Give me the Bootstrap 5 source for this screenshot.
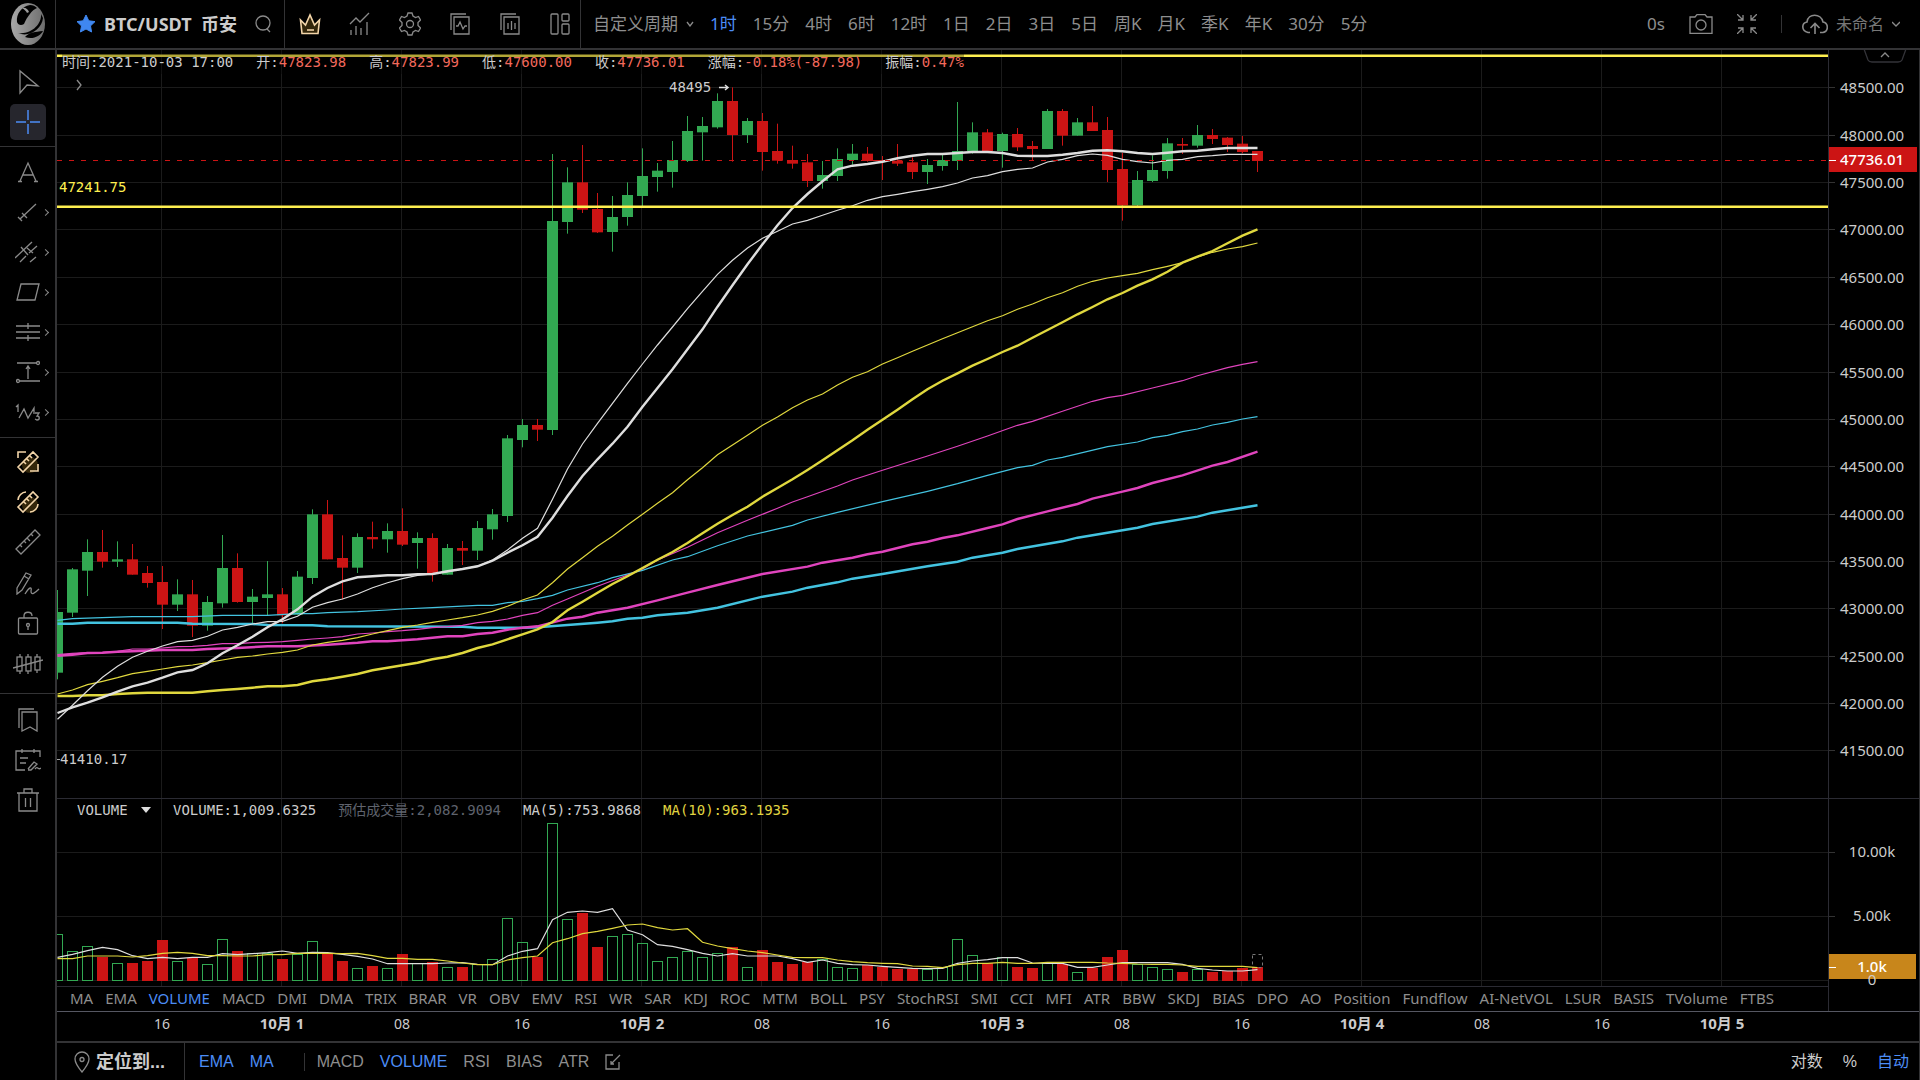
<!DOCTYPE html>
<html lang="zh-CN">
<head>
<meta charset="utf-8">
<meta name="viewport" content="width=device-width, initial-scale=1">
<title>BTC/USDT 币安</title>
<link rel="stylesheet" href="https://cdn.jsdelivr.net/npm/bootstrap@5.3.0/dist/css/bootstrap.min.css">
<style>
:root{--edge:#333335;--dim:#8e8e8e;--blue:#4c8df6;--axis:#2b2b33}
body{background:#000;color:var(--dim);font-family:"Noto Sans","Noto Sans CJK SC",sans-serif;font-size:17px;line-height:24px;overflow:hidden}
button,select{background:none;border:0;padding:0;color:inherit;font:inherit;white-space:nowrap}
button svg,.plain-ico svg{display:block}
svg.ico{fill:none;stroke:#8a8a8a;stroke-width:1.3}
.on{color:var(--blue)}
.topbar{height:50px;border-bottom:2px solid var(--edge)}
.logo-cell{width:56px;border-right:1px solid var(--edge)}
.pair-cell{width:229px;border-right:1px solid var(--edge);padding-left:20px}
.pair-name{font-size:18px;font-weight:700;color:#ccc;margin-right:18px}
.tools-cell{width:296px;border-right:1px solid var(--edge)}
.tools-cell button{width:50px;height:48px;display:flex;flex-shrink:0;align-items:center;justify-content:center}
.period-nav{gap:16px;padding-left:12px}
.account{padding-right:20px}
.account .bar{margin:0 20px 0 24px}
.cloud-name{font-size:16px;color:#777}
.toolbar-left{width:57px;border-right:2px solid var(--edge)}
.tool-set{border-bottom:1px solid var(--edge)}
.tool-set button{position:relative;display:flex;width:100%;height:40px;align-items:center;justify-content:center}
.tool-set:nth-child(1){padding:12px 0 4px}
.tool-set:nth-child(2){padding:5px 0 5px}
.tool-set:nth-child(3){padding:4px 0 11px}
.tool-set:nth-child(4){padding:6px 0;border:0}
.tool-set .picked svg{background:#26262d;border-radius:5px}
.has-sub::after{content:"";position:absolute;right:7px;top:18px;width:5px;height:5px;border:solid #888;border-width:1px 1px 0 0;transform:rotate(45deg)}
.work{border-right:1px solid var(--edge)}
.axis-col{width:91px;border-left:1px solid var(--axis)}
.plot{min-height:0}
.plot svg.fill,.axis-col svg.fill{position:absolute;inset:0;width:100%;height:100%}
.mono{font:14px/22px "DejaVu Sans Mono","Noto Sans CJK SC",monospace;color:#ccc}
.quote-strip{position:absolute;left:5px;top:0;height:24px;gap:23px;background:rgba(0,0,0,.3);white-space:nowrap}
.quote-strip b{font-weight:400;color:#f2695c}
.fold{position:absolute;left:13px;top:28px}
.vol-strip{position:absolute;left:20px;top:749px;gap:22px;white-space:nowrap}
.vol-strip select{appearance:none;width:56px}
.estimate{color:#5f636d}
.ma-slow{color:#e0d440}
.ind-row{height:25px;border-top:1px solid var(--axis);padding:0 0 3px 13px;gap:12px;font-size:15px;line-height:20px;overflow:hidden}
.time-row{height:32px;border-top:1px solid #555762;border-bottom:2px solid var(--edge)}
.foot{height:37px;font:16px/24px "Liberation Sans","Noto Sans CJK SC",sans-serif;color:var(--dim)}
.locate{width:128px;border-right:1px solid var(--edge);padding-left:17px;gap:6px;color:#ccc;font-size:18px;font-weight:700}
.picks{padding-left:14px;gap:16px}
.picks .bar{margin:0 -4px 0 14px}
.scale-mode{padding-right:10px;color:#ccc}
.bar{width:1px;height:18px;background:var(--edge)}
svg text{font-family:"Noto Sans","Noto Sans CJK SC",sans-serif;fill:#ccc}
svg .lbl{font-size:15px}
svg .hour{font-size:14px}
svg .day{font-size:15px;font-weight:700}
svg text.code{font:14px "DejaVu Sans Mono",monospace}
svg text.hot{fill:#fff;font-weight:500}
.fold-tab{position:absolute;right:11px;top:-2px}
</style>
<script src="https://cdn.jsdelivr.net/npm/bootstrap@5.3.0/dist/js/bootstrap.bundle.min.js"></script>
</head>
<body>
<div class="d-flex flex-column vh-100">
<header class="topbar d-flex align-items-stretch flex-shrink-0">
  <div class="logo-cell plain-ico d-flex align-items-center justify-content-center">
    <svg width="36" height="44" viewBox="0 0 36 44"><defs><linearGradient id="ball" x1="0" x2="1"><stop offset="0" stop-color="#a8a8a8"/><stop offset="1" stop-color="#6d6d6d"/></linearGradient></defs><ellipse cx="18" cy="22" rx="17" ry="21" fill="url(#ball)"/><path d="M7 20C6 12 12 4 20 3c3 0 5 1 7 3-5 2-10 9-13 16-3 2-6 1-7-2zM31 12c1 10-10 21-23 19 11 5 24-4 25-15zM15 35c5-5 10-5 18-6-3 5-10 9-18 6z" fill="#000"/><path d="M12 6c3-1 6 1 7 4l-2 1c-1-2-3-4-5-5z" fill="#9a9a9a"/></svg>
  </div>
  <div class="pair-cell d-flex align-items-center plain-ico">
    <svg width="20" height="20" viewBox="0 0 20 20" class="me-2"><path d="M10 1l2.8 5.8 6.2.8-4.500 4.300L15.600 18 10 15 4.400 18l1.100-6.100L1 7.600l6.200-.8z" fill="#3f87f0" stroke="#3f87f0"/></svg>
    <span class="pair-name">BTC/USDT&nbsp; 币安</span>
    <button aria-label="搜索"><svg class="ico" width="18" height="20" viewBox="0 0 18 20"><circle cx="8" cy="9" r="7"/><path d="M12 15l3 3"/></svg></button>
  </div>
  <div class="tools-cell d-flex align-items-center">
    <button aria-label="会员"><svg class="ico" width="22" height="22" viewBox="0 0 22 22"><path d="M3 20.500L1.500 7l5 5L11 2l4.500 10 5-5L19 20.500z" fill="#33260a" style="stroke:#f3d5a9;stroke-width:1.600"/><path d="M8 17h7" style="stroke:#f3d5a9;stroke-width:1.600"/></svg></button>
    <button aria-label="指标"><svg class="ico" width="22" height="24" viewBox="0 0 22 24"><path d="M1 12l6-6 4 4 9-9M2 18v5M7 14v9M12 16v7M18 10v13"/></svg></button>
    <button aria-label="设置"><svg class="ico" width="22" height="24" viewBox="0 0 22 24"><path d="M9 1h4l1 3 2.500 1.500L19.500 4.500l2 3.500-2.500 2.500v3l2.500 2.500-2 3.500-3-1L14 20l-1 3H9l-1-3-2.500-1.500-3 1-2-3.500L3 13.500v-3L.5 8l2-3.500 3 1L8 4z"/><circle cx="11" cy="12" r="3.500"/></svg></button>
    <button aria-label="线形"><svg class="ico" width="22" height="24" viewBox="0 0 22 24"><path d="M5 5h15v17H5zM2 18V2h15M7 14h2l2-4 3 7 2-3h2"/></svg></button>
    <button aria-label="复盘"><svg class="ico" width="22" height="24" viewBox="0 0 22 24"><path d="M5 5h15v17H5zM2 18V2h15M9 11v6M12.500 9v9M16 11v6"/></svg></button>
    <button aria-label="布局"><svg class="ico" width="22" height="24" viewBox="0 0 22 24"><rect x="2" y="2" width="7" height="20" rx="1"/><rect x="13" y="2" width="7" height="7" rx="1"/><rect x="13" y="12" width="7" height="10" rx="1"/></svg></button>
  </div>
  <nav class="period-nav d-flex align-items-center">
    <button class="d-flex align-items-center gap-1">自定义周期<svg class="ico mx-1 me-0" width="8" height="6" viewBox="0 0 8 6"><path d="M1 1l3 4 3-4"/></svg></button>
    <button class="on">1时</button><button>15分</button><button>4时</button><button>6时</button><button>12时</button><button>1日</button><button>2日</button><button>3日</button><button>5日</button><button>周K</button><button>月K</button><button>季K</button><button>年K</button><button>30分</button><button>5分</button>
  </nav>
  <div class="account ms-auto d-flex align-items-center">
    <span class="me-4">0s</span>
    <button class="me-4" aria-label="截图"><svg class="ico" width="24" height="20" viewBox="0 0 24 20"><path d="M1 3h5l2-2.400h8L18 3h5v16.400H1z"/><circle cx="12" cy="11" r="5"/></svg></button>
    <button aria-label="退出全屏"><svg class="ico" width="20" height="20" viewBox="0 0 20 20"><path d="M0 0l6 6M1 6h5V1M20 0l-6 6M19 6h-5V1M0 20l6-6M1 14h5v5M20 20l-6-6M19 14h-5v5"/></svg></button>
    <span class="bar"></span>
    <button class="d-flex align-items-center cloud-name"><svg class="ico me-2" width="26" height="20" viewBox="0 0 26 20"><path d="M8 18.500H6C-1 17-.5 9 5 8 6-1 19-1 21 8c5.500 1 6 9 0 10.500h-3M13 20V10M8.500 14L13 9.500l4.500 4.500" style="stroke-width:1.600"/></svg>未命名<svg class="ico ms-2" width="8" height="6" viewBox="0 0 8 6"><path d="M0 1l4 4 4-4"/></svg></button>
  </div>
</header>

<div class="d-flex flex-fill plot">
<aside class="toolbar-left flex-shrink-0">
  <div class="tool-set">
    <button aria-label="光标"><svg class="ico" width="24" height="26" viewBox="0 0 24 26"><path d="M4 2v22l7-8 11 1z"/></svg></button>
    <button class="picked" aria-label="十字线"><svg class="ico" width="36" height="36" viewBox="0 0 36 36"><path d="M18 6v10M18 20v10M6 18h10M20 18h10" style="stroke:#4c8df6;stroke-width:1.500"/></svg></button>
  </div>
  <div class="tool-set">
    <button aria-label="文字"><svg class="ico" width="24" height="24" viewBox="0 0 24 24"><path d="M4 21L12 3l8 18M7 15h10M2 21.500h4M18 21.500h4"/></svg></button>
    <button class="has-sub" aria-label="线段"><svg class="ico" width="24" height="24" viewBox="0 0 24 24"><path d="M4 19L20 4M2 17l4 4M6 13l5 5"/></svg></button>
    <button class="has-sub" aria-label="平行线"><svg class="ico" width="26" height="24" viewBox="0 0 26 24"><path d="M0 18L17 2M5 22l6-6M14 13l8-7M15 22l6-5M6 7l7 8M12 8l6 5"/></svg></button>
    <button class="has-sub" aria-label="图形"><svg class="ico" width="24" height="24" viewBox="0 0 24 24"><path d="M5 4h18l-4 16H1z"/></svg></button>
    <button class="has-sub" aria-label="水平线"><svg class="ico" width="24" height="24" viewBox="0 0 24 24"><path d="M0 6h24M0 12h24M0 18h24M12 3v6M12 15v6"/></svg></button>
    <button class="has-sub" aria-label="测量"><svg class="ico" width="24" height="24" viewBox="0 0 24 24"><path d="M1 3h20M3 21h21M12 19V7M10 9l2-3 2 3"/><circle cx="22" cy="3" r="1.500"/><circle cx="2" cy="21" r="1.500"/></svg></button>
    <button class="has-sub" aria-label="波浪"><svg class="ico" width="26" height="24" viewBox="0 0 26 24"><path d="M1 7l2-2v7M4 18l5-9 4 9 6-10 0 6M20 13h4l-2 3c3 0 3 4 0 4l-2-1"/></svg></button>
  </div>
  <div class="tool-set">
    <button aria-label="标尺一"><svg class="ico" width="24" height="24" viewBox="0 0 24 24"><circle cx="14" cy="15" r="8" fill="#33260a" style="stroke:none"/><path d="M2 8V2h8M22 14v7h-8M2 17L17 2l5 5L7 22zM8 12l2 2M11 9l2 2M14 6l2 2" style="stroke:#f3d5a9;stroke-width:1.600"/></svg></button>
    <button aria-label="标尺二"><svg class="ico" width="24" height="24" viewBox="0 0 24 24"><circle cx="14" cy="15" r="8" fill="#33260a" style="stroke:none"/><path d="M2 10c0-4 4-8 8-8M22 14c0 4-4 8-8 8M2 17L17 2l5 5L7 22zM8 12l2 2M11 9l2 2M14 6l2 2" style="stroke:#f3d5a9;stroke-width:1.600"/></svg></button>
    <button aria-label="尺子"><svg class="ico" width="26" height="26" viewBox="0 0 26 26"><path d="M1 20L20 1l5 5L6 25zM5 16l2 2M9 12l2 2M12 9l3 3M16 5l2 2"/></svg></button>
    <button aria-label="画笔"><svg class="ico" width="26" height="26" viewBox="0 0 26 26"><path d="M2 19L11 4l5 2-9 15-5 4zM9 7l5 3M10 25c5-8 7-7 6-3 0 5 4 2 8-2"/></svg></button>
    <button aria-label="锁定"><svg class="ico" width="22" height="26" viewBox="0 0 22 26"><rect x="1.500" y="9" width="19" height="16" rx="1"/><path d="M7 9V7c0-5 8-5 8 0M11 17v4"/><circle cx="11" cy="16" r="1.500"/></svg></button>
    <button aria-label="蜡烛"><svg class="ico" width="30" height="26" viewBox="0 0 30 26"><path d="M0 19L30 11M7 5v3M7 22v3M15 5v3M15 22v3M24 5v3M24 21v3"/><rect x="4" y="8" width="5" height="14"/><rect x="13" y="8" width="5" height="14"/><rect x="22" y="8" width="5" height="13"/></svg></button>
  </div>
  <div class="tool-set">
    <button aria-label="书签"><svg class="ico" width="22" height="24" viewBox="0 0 22 24"><path d="M5 4h15v19l-7-4-8 4zM2 20V1h15"/></svg></button>
    <button aria-label="笔记"><svg class="ico" width="26" height="24" viewBox="0 0 26 24"><path d="M10 22H1V3h24v6M7 1v4M19 1v4M5 10h8M5 15h6M13 21l6-7 3 2-6 6h-3M20 21c3-4 3 2 6-1"/></svg></button>
    <button aria-label="删除"><svg class="ico" width="22" height="24" viewBox="0 0 22 24"><path d="M0 5h22M2 5v18h18V5M7 5V1h8v4M8.500 10v9M13.500 10v9"/></svg></button>
  </div>
</aside>

<main class="work d-flex flex-column flex-fill">
  <div class="d-flex flex-fill">
    <div class="d-flex flex-column flex-fill">
      <div class="position-relative flex-fill plot overflow-hidden">
        <svg class="fill" id="chart" role="img" aria-label="K线图"></svg>
        <div class="quote-strip mono d-flex align-items-center">
          <span>时间:2021-10-03 17:00</span><span>开:<b>47823.98</b></span><span>高:<b>47823.99</b></span><span>低:<b>47600.00</b></span><span>收:<b>47736.01</b></span><span>涨幅:<b>-0.18%(-87.98)</b></span><span>振幅:<b>0.47%</b></span>
        </div>
        <button class="fold" aria-label="展开"><svg class="ico" width="18" height="14" viewBox="0 0 18 14"><path d="M7 2l4 5-4 5"/></svg></button>
        <div class="vol-strip mono d-flex align-items-center">
          <label class="d-flex align-items-center gap-2"><select class="mono" aria-label="副图指标"><option>VOLUME</option><option>MACD</option></select><svg width="10" height="6" viewBox="0 0 10 6"><path d="M0 0h10L5 6z" fill="#ddd"/></svg></label>
          <span>VOLUME:1,009.6325</span><span class="estimate">预估成交量:2,082.9094</span><span>MA(5):753.9868</span><span class="ma-slow">MA(10):963.1935</span>
        </div>
      </div>
      <div class="ind-row d-flex align-items-center flex-shrink-0" id="indicators"></div>
    </div>
    <div class="axis-col position-relative flex-shrink-0">
      <svg class="fill" id="axis"></svg>
      <button class="fold-tab" aria-label="收起"><svg class="ico" width="46" height="16" viewBox="0 0 46 16"><path d="M2 1l4 11c1 2 2 2 4 2h26c2 0 3 0 4-2l4-11" style="stroke:#333338"/><path d="M19 9l4-4 4 4"/></svg></button>
    </div>
  </div>
  <div class="time-row flex-shrink-0"><svg id="times" class="d-block" width="100%" height="28"></svg></div>
  <footer class="foot d-flex align-items-stretch flex-shrink-0">
    <button class="locate d-flex align-items-center"><svg class="ico" width="16" height="22" viewBox="0 0 16 22"><path d="M8 21C3 15 1 11 1 8a7 7 0 0 1 14 0c0 3-2 7-7 13z"/><circle cx="8" cy="8.500" r="2"/></svg>定位到...</button>
    <div class="picks d-flex align-items-center"><button class="on">EMA</button><button class="on">MA</button><span class="bar"></span><button>MACD</button><button class="on">VOLUME</button><button>RSI</button><button>BIAS</button><button>ATR</button><button aria-label="编辑"><svg class="ico" width="16" height="16" viewBox="0 0 16 16"><path d="M8 1H1v14h13V8M6 10l9-9M6 7v3h3"/></svg></button></div>
    <div class="scale-mode ms-auto d-flex align-items-center"><button class="me-3">对数</button><button class="mx-1">%</button><button class="on ms-3">自动</button></div>
  </footer>
</main>
</div>
</div>

<script>
const names = 'MA EMA VOLUME MACD DMI DMA TRIX BRAR VR OBV EMV RSI WR SAR KDJ ROC MTM BOLL PSY StochRSI SMI CCI MFI ATR BBW SKDJ BIAS DPO AO Position Fundflow AI-NetVOL LSUR BASIS TVolume FTBS'.split(' ');
document.getElementById('indicators').innerHTML = names.map(n => `<button${n === 'VOLUME' ? ' class="on"' : ''}>${n}</button>`).join('');

const UP = '#32a852', DOWN = '#cc1414', STEP = 15, FIRST = 57.5;
const px = i => FIRST + STEP * i;
// heights are stored in thirds of a pixel, counted from the origin of their block
const y = (origin, v) => origin + v / 3;

// high, body top, body bottom, low, direction
const candles = [
 [460, '390 456 638 658 G|324 328 458 471 G|238 276 332 408 G|210 276 305 323 R|244 298 305 321 G|252 298 344 344 R|318 339 369 383 R|318 366 434 507 R|358 403 434 453 G|360 403 497 531 R|408 426 497 512 G|225 324 430 443 G|280 324 426 428 R|387 410 426 490 G|303 403 414 466 G|384 403 466 490 R|333 350 464 464 G|148 163 354 372 G|120 163 298 298 R|226 294 323 418 R|220 231 323 339 G|185 231 238 266 R|190 213 238 278 G|145 213 254 258 R|217 234 249 326 G|220 234 340 365 R|252 264 344 344 G|243 264 272 315 R|183 204 272 300 G|147 163 208 239 G'],
 [80, '1065 1075 1308 1326 G|1017 1035 1080 1102 G|1017 1035 1049 1083 R|222 423 1050 1065 G|262 307 426 461 G|195 307 389 399 R|339 387 457 459 R|348 411 456 515 G|307 345 411 437 G|205 288 348 378 G|249 272 291 335 G|183 240 276 323 G|108 153 243 246 G|111 138 157 242 G|40 63 142 146 G|22 63 165 245 R|114 123 165 189 G|99 123 216 272 R|131 213 242 251 R|197 240 251 266 R|222 247 303 321 R|243 285 303 326 G|205 237 288 303 G|192 221 240 254 G|201 221 243 245 R|228 240 243 300 R|192 242 251 258 R|232 247 276 297 R|237 255 276 312 G|225 240 258 272 G|66 213 243 270 G|127 157 213 221 G|147 157 213 213 R|158 162 213 263 G|144 162 202 213 R|183 198 207 242 R|87 93 207 207 G|87 93 167 197 R|114 127 167 167 G|78 127 153 153 R|111 150 270 306 R|218 267 376 422 R|273 300 376 380 G|226 270 303 306 G|174 190 273 296 G|174 192 197 222 R|135 165 197 203 G|147 165 177 192 R|171 173 195 216 R|168 191 216 220 R|213 213 243 276 R']
].flatMap(([o, s]) => s.split('|').map(t => { const p = t.split(' '); return [...p.slice(0, 4).map(v => y(o, +v)), p[4]]; }));

// moving averages: bar:value pairs, or bare values for consecutive bars
function parse(parts) {
  let i = -1; const pts = [];
  for (const [o, s] of parts) for (const t of s.split(' ')) {
    const [a, b] = t.split(':');
    if (b === undefined) { i++; pts.push([px(i), y(o, +a)]); } else { i = +a; pts.push([px(i), y(o, +b)]); }
  }
  return pts.map(p => p[0] + ',' + p[1].toFixed(1)).join(' ');
}
const averages = [
 ['#43c3e0', 1, [[460, '0:481 476 3:473 5:470 9:470 11:466 14:466 16:461 461 458 20:455 22:450 447 25:443 28:436 436 428 424 416'], [220, '33:1126 1110 36:1088 1073 39:1051 41:1020 1010 44:977 46:948 49:916 900 52:877 55:845 58:814 60:791 62:766 64:743 736 720 712 70:680 72:666 653 646 635 627 615 607 597 590']]],
 ['#43c3e0', 2, [[460, '0:491 491 488 8:488 491 13:492 495 17:496 499 27:500 503 31:503'], [220, '32:1222 36:1208 1204 1196 1193 1186 42:1178 44:1163 47:1130 49:1115 1103 52:1087 1076 55:1062 58:1039 60:1025 1013 63:998 987 67:964 953 70:938 72:923 912 76:890 878 79:863 856']]],
 ['#e044bd', 1, [[460, '0:584 580 578 577 574 567 567 564 560 559 556 551 551 548 547 545 541 537 534 530 522 519 515 512 508 503 500 496 488 484 477 466 458'], [220, '33:1156 1137 36:1099 38:1065 1047 1020 42:982 44:938 46:901 48:865 846 830 52:798 780 55:751 58:708 60:679 62:648 64:616 604 67:574 69:544 533 526 73:504 75:482 467 78:443 433 425']]],
 ['#e044bd', 2, [[460, '0:587 584 579 578 575 574 7:570 9:570 567 12:564 14:559 16:559 18:554 20:548 544 544 24:538 26:529 529 522 518 509 503 499'], [220, '34:1196 1190 1178 38:1163 40:1141 42:1118 44:1095 47:1062 50:1040 1028 53:1013 1003 995 57:973 965 954 946 62:924 913 897 66:874 68:852 836 71:815 804 789 75:766 77:737 726 80:695']]],
 ['#e0d83e', 1, [[460, '0:702 690 674 664 653 641 634 627 620 615 608 600 592 588 582 577 570 555 547 541 533 522 512 502 495 487 480 473 465 454 439 420 405'], [220, '33:1088 1047 1013 979 949 915 883 850 818 779 743 704 675 646 616 591 563 540 522 495 472 455 432 413 394 375 356 338 320 302 287 268 252 233 218 199 184 174 167 160 149 139 128 111 97 87 80 69']]],
 ['#e0d83e', 2, [[460, '0:708 708 706 706 702 700 698 698 698 698 694 690 687 683 679 679 675 664 658 650 642 631 623 616 608 598 590 579 564 553 538 523 508'], [220, '33:1206 1171 1145 1118 1092 1069 1044 1019 996 969 940 911 885 860 830 804 778 750 721 691 661 629 599 569 538 508 482 460 437 417 396 377 353 330 307 283 261 238 219 197 178 155 128 110 93 70 47 28']]],
 ['#dedede', 1, [[460, '0:778 736 692 652 619 592 574 558 545 541 529 510 502 492 485 484 469 442 428 417 402 383 368 356 346 342 335 327 319 300 270 235 205'], [80, '33:1258 1167 1092 1030 970 910 852 795 741 686 634 583 541 504 475 454 432 421 406 391 377 361 350 343 335 328 320 309 294 287 275 268 264 246 238 227 222 226 238 245 249 241 238 230 227 223 223 223']]],
 ['#dedede', 2, [[460, '0:759 742 728 712 695 679 668 653 637 630 610 580 556 530 502 478 448 410 384 364 352 349 346 346 343 342 334 327 319 302 278 256 230'], [80, '33:1313 1248 1188 1138 1091 1040 980 924 868 808 748 680 616 553 493 436 384 342 304 268 257 252 245 235 227 222 222 219 216 216 219 227 228 228 224 219 212 211 214 219 222 218 214 212 208 204 204 204']]]
];
const volumes = [[790, '433 482 467 501 520 519 512 451 513 503 523 448 482 490 490 508 493 452 490 512 535 527 535 492 520 517 531 531 523 508 385 457 501 100 388 369 471 438 433'], [900, '129 182 171 152 171 159 141 202 150 186 193 185 177 202 205 196 201 207 207 206 202 118 166 190 171 202 205 190 192 217 205 171 151 193 202 207 216 207 216 214 205 202']].flatMap(([o, s]) => s.split(' ').map(v => y(o, +v)));
const volumeAverages = [
 ['#dedede', 1, [[790, '0:502 493 482 472 479 497 506 502 506 502 502 491 494 491 488 483 490 487 488 493 499 507 521 521 521 521 519 518 523 524 498 484 476 389 367 363 367 356 420'], [900, '39:104 134 139 149 160 168 161 168 168 168 176 187 180 190 194 195 199 202 205 206 205 190 183 179 173 173 189 190 190 202 202 195 188 188 188 188 193 205 210 213 213 209']]],
 ['#e0d83e', 1, [[790, '0:506 506 498 498 498 501 497 490 487 490 497 497 498 498 494 494 490 490 490 491 490 497 505 505 508 508 513 519 524 524 510 503 498 458 446 431 424 415 405 402 413 420 416'], [900, '43:127 138 146 153 158 165 172 173 173 180 185 188 190 191 198 199 203 194 190 190 187 190 190 187 187 187 187 189 190 192 193 193 195 199 199 199 199 203']]]
];
const line = (x1, y1, x2, y2, c, w = 1, extra = '') => `<line x1="${x1}" y1="${y1}" x2="${x2}" y2="${y2}" stroke="${c}" stroke-width="${w}" ${extra}/>`;
const poly = ([c, w, parts]) => `<polyline points="${parse(parts)}" fill="none" stroke="${c}" stroke-width="${w === 2 ? 2.4 : 1.2}"/>`;
const priceY = k => Math.round(87.4 + k * 47.36) + .5;

let g = '', FAR = 4000;
for (let x = 161.5; x < FAR; x += 120) g += line(x, 50, x, 986, '#1b1b1b');
for (let k = 0; k < 15; k++) g += line(57, priceY(k), FAR, priceY(k), '#1b1b1b');
for (const v of [852.5, 916.5, 980.5]) g += line(57, v, FAR, v, '#1b1b1b');
g += line(57, 798.5, FAR, 798.5, '#2b2b33');
candles.forEach(([h, t, b, l, d], i) => {
  const c = d === 'G' ? UP : DOWN, x = px(i);
  g += line(x, h, x, l, c) + `<rect x="${x - 5.5}" y="${t}" width="11" height="${Math.max(1, b - t)}" fill="${c}"/>`;
  const v = Math.round(volumes[i]);
  g += d === 'G' ? `<rect x="${x - 5}" y="${v + .5}" width="10" height="${980 - v}" fill="none" stroke="${UP}"/>` : `<rect x="${x - 5.5}" y="${v}" width="11" height="${981 - v}" fill="${DOWN}"/>`;
});
g += `<rect x="${px(80) - 5}" y="954.5" width="10" height="13" fill="none" stroke="#777" stroke-dasharray="3 3"/>`;
g += averages.map(poly).join('') + volumeAverages.map(poly).join('');
g += line(57, 160.5, FAR, 160.5, DOWN, 1, 'stroke-dasharray="5 7"');
g += line(57, 55.7, FAR, 55.7, '#fff050', 2.5) + line(57, 206.7, FAR, 206.7, '#fff050', 2.5);
g += '<text class="code" x="59" y="192" style="fill:#fff050">47241.75</text><text class="code" x="60" y="764">41410.17</text>' + line(57, 759.5, 60, 759.5, '#aaa');
g += '<text class="code" x="669" y="92">48495</text><path d="M719 87.500h9M725 85l3 2.500-3 2.500" fill="none" stroke="#ddd" stroke-width="1.500"/>';
document.getElementById('chart').innerHTML = `<g transform="translate(-57,-50)">${g}</g>`;

let a = '';
for (let k = 0; k < 15; k++) a += line(0, priceY(k), 6, priceY(k), '#333') + `<text class="lbl" x="11" y="${priceY(k) + 5}">${48500 - 500 * k}.00</text>`;
a += line(0, 798.5, 90, 798.5, '#2b2b33');
for (const [v, s] of [[852.5, '10.00k'], [916.5, '5.00k']]) a += line(0, v, 6, v, '#333') + `<text class="lbl" x="43" y="${v + 4}" text-anchor="middle">${s}</text>`;
a += `<rect x="-1" y="147" width="89" height="25" fill="${DOWN}"/>` + line(0, 160.5, 7, 160.5, '#fff') + '<text class="lbl hot" x="11" y="165">47736.01</text>';
a += '<rect x="-1" y="954" width="88" height="25" fill="#c8861b"/>' + line(0, 967.5, 7, 967.5, '#fff') + '<text class="lbl" x="43" y="985" text-anchor="middle">0</text><text class="lbl hot" x="43" y="972" text-anchor="middle">1.0k</text>';
document.getElementById('axis').innerHTML = `<g transform="translate(0,-50)">${a}</g>`;

document.getElementById('times').innerHTML = ['16', '10月 1', '08', '16', '10月 2', '08', '16', '10月 3', '08', '16', '10月 4', '08', '16', '10月 5']
  .map((t, i) => `<text class="${t.length > 2 ? 'day' : 'hour'}" x="${105 + 120 * i}" y="17" text-anchor="middle">${t}</text>`).join('');
</script>
</body>
</html>
